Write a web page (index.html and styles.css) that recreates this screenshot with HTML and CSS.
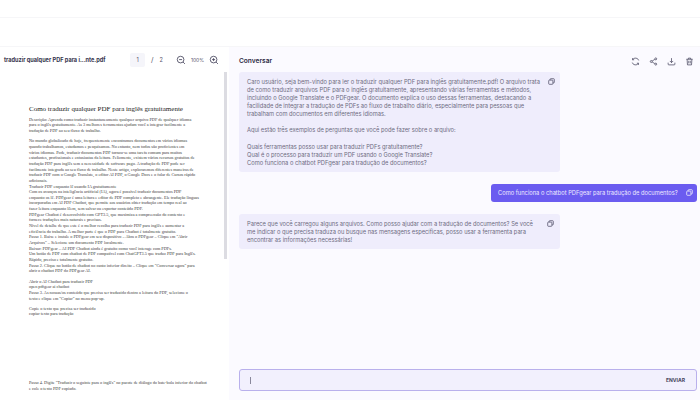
FILE: index.html
```html
<!DOCTYPE html>
<html lang="pt">
<head>
    <meta charset="UTF-8">
    <title>Conversar</title>
    <link rel="stylesheet" href="styles.css">
</head>
<body>
    <div class="topbar"></div>
    <div class="subbar"></div>
    <div class="main">
        <section class="viewer">
            <div class="viewer-head">
                <span class="file-name">traduzir qualquer PDF para i...nte.pdf</span>
                <span class="page-input">1</span>
                <span class="page-total">/</span>
                <span class="page-num">2</span>
                <svg class="zoom-icon" viewBox="0 0 12 12"><circle cx="5.5" cy="5.5" r="4"/><path d="M3.7 5.5h3.6M8.5 8.5l2.2 2.2"/></svg>
                <span class="zoom-val">100%</span>
                <svg class="zoom-icon" viewBox="0 0 12 12"><circle cx="5.5" cy="5.5" r="4"/><path d="M3.7 5.5h3.6M5.5 3.7v3.6M8.5 8.5l2.2 2.2"/></svg>
            </div>
            <div class="viewer-body">
                <div class="pdf-page">
                    <h1>Como traduzir qualquer PDF para inglês gratuitamente</h1>
                    <p>Descrição: Aprenda como traduzir instantaneamente qualquer arquivo PDF de qualquer idioma<br>para o inglês gratuitamente. As 3 melhores ferramentas ajudam você a integrar facilmente a<br>tradução de PDF ao seu fluxo de trabalho.</p>
                    <p>No mundo globalizado de hoje, frequentemente encontramos documentos em vários idiomas<br>quando trabalhamos, estudamos e pesquisamos. No entanto, nem todos são proficientes em<br>vários idiomas. Pode, traduzir documentos PDF tornou-se uma tarefa comum para muitos<br>estudantes, profissionais e entusiastas da leitura. Felizmente, existem vários recursos gratuitos de<br>tradução PDF para inglês sem a necessidade de software pago. A tradução de PDF pode ser<br>facilmente integrada ao seu fluxo de trabalho. Neste artigo, exploraremos diferentes maneiras de<br>traduzir PDF com o Google Translate, o editor AI PDF, o Google Docs e o folar de Cursos rápido<br>adicionais.<br>Traduzir PDF enquanto lê usando IA gratuitamente<br>Com os avanços na inteligência artificial (IA), agora é possível traduzir documentos PDF<br>enquanto os lê. PDFgear é uma leitura e editor de PDF completo e abrangente. Ele tradução línguas<br>incorporadas em AI PDF Chatbot, que permite aos usuários obter tradução em tempo real ao<br>fazer leitura enquanto lêem, sem salvar ou exportar conteúdo PDF.<br>PDFgear Chatbot é desenvolvido com GPT3.5, que maximiza a compreensão do contexto e<br>fornece traduções mais naturais e precisas.<br>Nível de detalhe de que este é o melhor recolha para traduzir PDF para inglês e aumentar a<br>eficiência do trabalho. A melhor parte é que o PDF para Chatbot é totalmente gratuito.<br>Passo 1. Baixe e instale o PDFgear em seu dispositivo – Abra o PDFgear – Clique em "Abrir<br>Arquivos" – Selecione um documento PDF localmente.<br>Baixar: PDFgear – AI PDF Chatbot ainda é gratuito como você interage com PDFs.<br>Um botão de PDF com chatbot de PDF compatível com ChatGPT3.5 que traduz PDF para Inglês.<br>Rápido, preciso e totalmente gratuito.<br>Passo 2. Clique no botão de chatbot no canto inferior direito – Clique em "Conversar agora" para<br>abrir o chatbot PDF do PDFgear AI.</p>
                    <p>Abrir o AI Chatbot para traduzir PDF<br>open pdfgear ai chatbot<br>Passo 3. As nossas/os conteúdo que precisa ser traduzido dentro a leitura do PDF, selecione o<br>texto e clique em "Copiar" no menu pop-up.</p>
                    <p>Copie o texto que precisa ser traduzido<br>copiar texto para tradução</p>
                    <p class="pdf-last">Passo 4. Digite "Traduzir o seguinte para o inglês" no pacote de diálogo do bate-bola inferior do chatbot<br>e cole o texto PDF copiado.</p>
                </div>
                <div class="scrollbar"></div>
            </div>
        </section>
        <section class="chat">
            <div class="chat-head">
                <span class="chat-title">Conversar</span>
                <div class="chat-tools">
                    <svg viewBox="0 0 12 12"><path d="M10.300 4.600A4.500 4.500 0 0 0 2.200 3.500M1.700 7.400a4.500 4.500 0 0 0 8.100 1.100M2 1.500v2.200h2.200M10 10.500V8.300H7.800"/></svg>
                    <svg viewBox="0 0 12 12"><circle cx="9" cy="2.500" r="1.300"/><circle cx="3" cy="6" r="1.300"/><circle cx="9" cy="9.500" r="1.300"/><path d="M4.200 5.300l3.600-2.100M4.200 6.700l3.600 2.100"/></svg>
                    <svg viewBox="0 0 12 12"><path d="M6 1.500v6M3.800 5.300L6 7.500l2.200-2.200M1.500 7.500v2a1 1 0 0 0 1 1h7a1 1 0 0 0 1-1v-2"/></svg>
                    <svg viewBox="0 0 12 12"><path d="M1.800 3h8.400M4.500 3V1.500h3V3M2.800 3l.5 7.500h5.400l.5-7.500M5 5v3.500M7 5v3.500"/></svg>
                </div>
            </div>
            <div class="messages">
                <div class="msg msg-bot">
                    <div class="msg-text">
                        <p>Caro usuário, seja bem-vindo para ler o traduzir qualquer PDF para inglês gratuitamente.pdf! O arquivo trata<br>de como traduzir arquivos PDF para o inglês gratuitamente, apresentando várias ferramentas e métodos,<br>incluindo o Google Translate e o PDFgear. O documento explica o uso dessas ferramentas, destacando a<br>facilidade de integrar a tradução de PDFs ao fluxo de trabalho diário, especialmente para pessoas que<br>trabalham com documentos em diferentes idiomas.</p>
                        <p>Aqui estão três exemplos de perguntas que você pode fazer sobre o arquivo:</p>
                        <p>Quais ferramentas posso usar para traduzir PDFs gratuitamente?<br>Qual é o processo para traduzir um PDF usando o Google Translate?<br>Como funciona o chatbot PDFgear para tradução de documentos?</p>
                    </div>
                    <svg class="copy-icon" viewBox="0 0 10 10"><rect x="1" y="3" width="6" height="6" rx="1"/><path d="M3 3V2a1 1 0 0 1 1-1h4a1 1 0 0 1 1 1v4a1 1 0 0 1-1 1H7"/></svg>
                </div>
                <div class="msg msg-user">
                    <div class="msg-text">Como funciona o chatbot PDFgear para tradução de documentos?</div>
                    <svg class="copy-icon" viewBox="0 0 10 10"><rect x="1" y="3" width="6" height="6" rx="1"/><path d="M3 3V2a1 1 0 0 1 1-1h4a1 1 0 0 1 1 1v4a1 1 0 0 1-1 1H7"/></svg>
                </div>
                <div class="msg msg-bot">
                    <div class="msg-text">Parece que você carregou alguns arquivos. Como posso ajudar com a tradução de documentos? Se você<br>me indicar o que precisa traduza ou busque nas mensagens específicas, posso usar a ferramenta para<br>encontrar as informações necessárias!</div>
                    <svg class="copy-icon" viewBox="0 0 10 10"><rect x="1" y="3" width="6" height="6" rx="1"/><path d="M3 3V2a1 1 0 0 1 1-1h4a1 1 0 0 1 1 1v4a1 1 0 0 1-1 1H7"/></svg>
                </div>
            </div>
            <div class="input-box">
                <span class="caret"></span>
                <span class="send">ENVIAR</span>
            </div>
        </section>
    </div>
</body>
</html>
```

FILE: styles.css
```css
* {
    box-sizing: border-box;
}

html, body {
    height: 100%;
}

body {
    margin: 0;
    background-color: #ffffff;
    color: #2c2a45;
    font-family: Inter, "Open Sans", sans-serif;
    overflow: hidden;
    display: flex;
    flex-direction: column;
}

.topbar {
    height: 18px;
    border-bottom: 1px solid #f6f6f8;
}

.subbar {
    height: 29px;
    border-bottom: 1px solid #f6f6f8;
}

.main {
    flex: 1;
    display: flex;
    min-height: 0;
}

.viewer {
    width: 229px;
    display: flex;
    flex-direction: column;
}

.viewer-head {
    height: 25px;
    display: flex;
    align-items: center;
    padding-left: 4px;
    font-size: 5.5px;
    color: #55536a;
}

.file-name {
    width: 126px;
    font-size: 5.6px;
    font-weight: 700;
    color: #35334d;
    white-space: nowrap;
}

.page-input {
    width: 15px;
    height: 14px;
    background-color: #f5f5fa;
    border-radius: 2px;
    text-align: center;
    line-height: 14px;
    margin-right: 6px;
}

.page-total {
    font-size: 7px;
    margin-right: 6px;
}

.page-num {
    margin-right: 13px;
}

.zoom-icon {
    width: 10px;
    height: 10px;
    fill: none;
    stroke: #45435c;
    stroke-width: 1;
}

.zoom-val {
    margin: 0 5px 0 5px;
    font-size: 5px;
}

.viewer-body {
    flex: 1;
    display: flex;
    min-height: 0;
}

.pdf-page {
    width: 224px;
    padding: 33px 0 0 29px;
    font-family: "Liberation Serif", serif;
    font-size: 4.27px;
    line-height: 5.65px;
    color: #3a3a3a;
    white-space: nowrap;
    overflow: hidden;
}

.pdf-page h1 {
    margin: 0 0 2.7px;
    font-size: 7px;
    line-height: 9px;
    font-weight: 400;
    color: #222222;
}

.pdf-page p {
    margin: 0 0 4.6px;
}

.pdf-page .pdf-last {
    margin-top: 63px;
}

.scrollbar {
    width: 3px;
    height: 187px;
    background-color: #dcdce2;
}

.chat {
    flex: 1;
    display: flex;
    flex-direction: column;
    background-color: #fbfaff;
    min-width: 0;
}

.chat-head {
    height: 25px;
    flex: none;
    display: flex;
    align-items: center;
    justify-content: space-between;
    padding: 3px 6px 0 10px;
}

.chat-title {
    font-size: 6.6px;
    font-weight: 600;
    color: #2c2a45;
}

.chat-tools {
    display: flex;
    gap: 9px;
}

.chat-tools svg {
    width: 9px;
    height: 9px;
    fill: none;
    stroke: #4a4860;
    stroke-width: 1;
}

.messages {
    flex: 1;
    display: flex;
    flex-direction: column;
    align-items: flex-start;
    padding: 0 10px;
    min-height: 0;
}

.msg {
    display: flex;
    justify-content: space-between;
    gap: 8px;
    border-radius: 3px;
    font-size: 5.74px;
    line-height: 8.1px;
    color: #6d6b80;
}

.msg-bot {
    width: 321px;
    padding: 6px 6px 5px 8px;
    background-color: #efedfc;
}

.msg-bot p {
    margin: 0 0 8px;
}

.msg-bot p:last-child {
    margin-bottom: 0;
}

.msg-text {
    flex: 1;
    white-space: nowrap;
}

.msg-user {
    align-self: flex-end;
    width: 206px;
    height: 18px;
    margin: 12px -7px 12px 0;
    padding: 0 6px 0 7px;
    align-items: center;
    background-color: #6b5cf0;
    color: #eeeaff;
}

.copy-icon {
    flex: none;
    width: 7px;
    height: 7px;
    fill: none;
    stroke: #45435c;
    stroke-width: 1;
}

.msg-user .copy-icon {
    stroke: #ffffff;
}

.input-box {
    flex: none;
    height: 22px;
    margin: 0 0 9px 10px;
    width: 458px;
    display: flex;
    align-items: center;
    justify-content: space-between;
    padding: 0 11px 0 10px;
    background-color: #f2f0fd;
    border: 1px solid #b9b0ec;
    border-radius: 3px;
}

.caret {
    width: 1px;
    height: 7px;
    background-color: #8a889c;
}

.send {
    font-size: 5px;
    font-weight: 700;
    color: #45435c;
}
```
